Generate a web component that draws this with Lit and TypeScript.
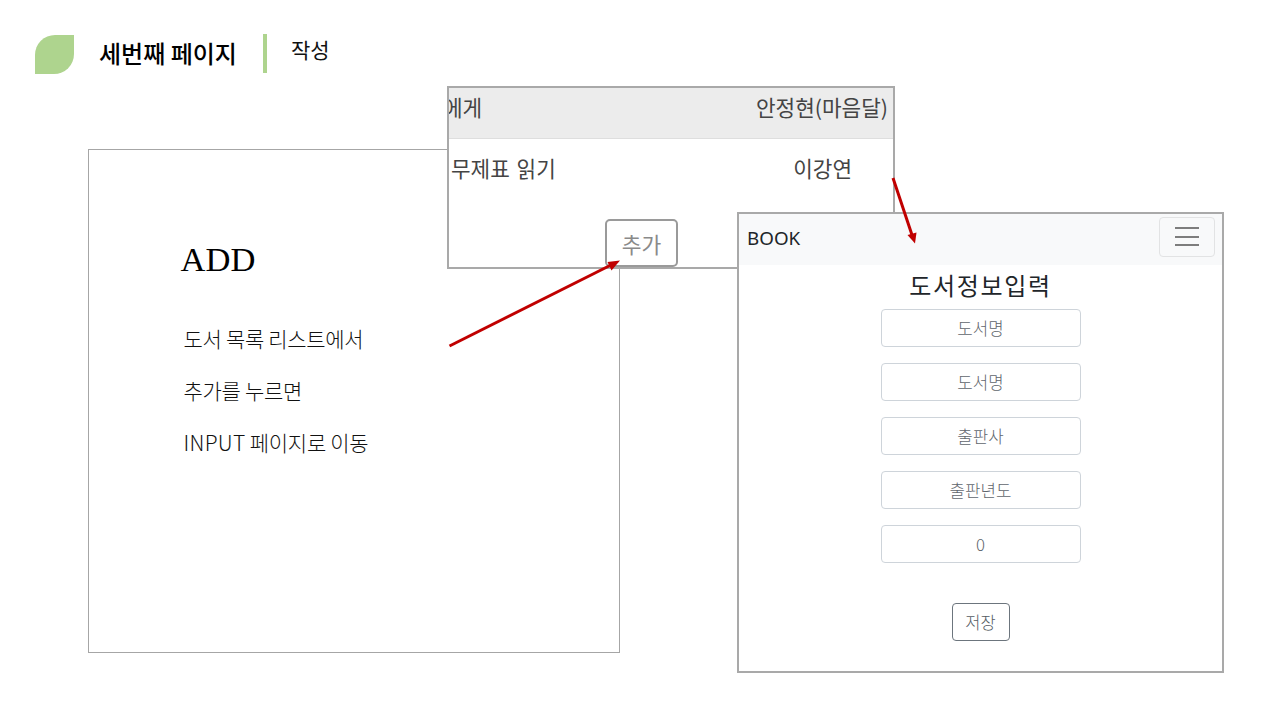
import { LitElement, html, css } from "lit";
import { customElement } from "lit/decorators.js";

@customElement("app-root")
export class AppRoot extends LitElement {
  static styles = css`
    :host { display: block; width: 1280px; height: 720px; background: #fff; font-family: "Noto Sans CJK KR", "Noto Sans", sans-serif; color: #111; overflow: hidden; }
    .slide { position: relative; width: 1280px; height: 720px; background: #fff; overflow: hidden; }
    .head { display: flex; align-items: center; height: 40px; padding: 34px 0 0 35px; }
    .leaf { width: 39px; height: 39px; background: #aed48e; border-radius: 20px 0 20px 0; flex: none; margin-top: 1px; }
    .title { margin-left: 25px; font-size: 24px; font-weight: 500; color: #000; line-height: 40px; margin-top: -2px; }
    .sep { width: 4px; height: 39px; background: #aed48e; margin-left: 26px; flex: none; margin-top: -1px; }
    .sub { margin-left: 24px; font-size: 21px; color: #111; line-height: 30px; align-self: flex-start; }

    .frame { position: absolute; left: 88px; top: 149px; width: 530px; height: 502px; border: 1px solid #a6a6a6; }
    .add { position: absolute; left: 91.5px; top: 85px; font-family: "Liberation Serif", serif; font-size: 34.6px; line-height: 48px; color: #000; }
    .lines { position: absolute; left: 94.5px; top: 170px; display: flex; flex-direction: column; gap: 16px; font-size: 21px; font-weight: 300; line-height: 36px; color: #111; letter-spacing: -0.3px; }
    .latin { letter-spacing: 0.3px; }

    .list { position: absolute; left: 447px; top: 86px; width: 444px; height: 179px; border: 2px solid #a9a9a9; background: #fff; font-size: 21.3px; color: #444; overflow: hidden; }
    .list-head { display: flex; justify-content: space-between; align-items: center; height: 37px; background: #ececec; border-bottom: 1px solid #dedede; padding: 0 5px 13px 0; }
    .list-head .cut { margin-left: -6px; }
    .list-row { display: flex; justify-content: space-between; align-items: center; height: 56px; padding: 0 41px 0 2px; word-spacing: 2px; }
    .add-btn { position: absolute; left: 156px; top: 131px; width: 69px; height: 44px; border: 2px solid #9a9a9a; border-radius: 5px; background: #fff; display: flex; align-items: center; justify-content: center; font-size: 21.5px; color: #8a8a8a; }

    .book { position: absolute; left: 737px; top: 212px; width: 483px; height: 457px; border: 2px solid #a9a9a9; background: #fff; display: flex; flex-direction: column; align-items: center; }
    .nav { align-self: stretch; height: 51px; background: #f8f9fa; display: flex; align-items: center; justify-content: space-between; padding: 0 7px 0 8px; }
    .brand { font-family: "Noto Sans", sans-serif; font-size: 18.8px; color: #212529; margin-top: -4px; }
    .toggler { width: 54px; height: 38px; border: 1px solid #e2e3e4; border-radius: 4px; display: flex; flex-direction: column; align-items: center; justify-content: center; gap: 6.5px; margin-top: -6px; }
    .toggler i { display: block; width: 24px; height: 2px; background: #7d7d7d; }
    h1 { margin: 3px 0 0; font-size: 24px; font-weight: 400; line-height: 34px; color: #212529; letter-spacing: 1.7px; }
    .fields { display: flex; flex-direction: column; gap: 16px; margin-top: 7px; }
    .field { width: 198px; height: 36px; border: 1px solid #ced4da; border-radius: 4px; display: flex; align-items: center; justify-content: center; font-size: 16.8px; font-weight: 300; color: #5f666d; background: #fff; }
    .save { margin-top: 40px; width: 56px; height: 36px; border: 1px solid #6c757d; border-radius: 4px; display: flex; align-items: center; justify-content: center; font-size: 16.5px; font-weight: 300; color: #555c63; }

    .arrows { position: absolute; left: 0; top: 0; pointer-events: none; }
  `;

  render() {
    return html`<div class="slide">
      <div class="head">
        <div class="leaf"></div>
        <div class="title">세번째 페이지</div>
        <div class="sep"></div>
        <div class="sub">작성</div>
      </div>

      <div class="frame">
        <div class="add">ADD</div>
        <div class="lines">
          <div>도서 목록 리스트에서</div>
          <div>추가를 누르면</div>
          <div><span class="latin">INPUT</span> 페이지로 이동</div>
        </div>
      </div>

      <div class="list">
        <div class="list-head"><span class="cut">에게</span><span>안정현(마음달)</span></div>
        <div class="list-row"><span>무제표 읽기</span><span>이강연</span></div>
        <div class="add-btn">추가</div>
      </div>

      <div class="book">
        <div class="nav">
          <span class="brand">BOOK</span>
          <span class="toggler"><i></i><i></i><i></i></span>
        </div>
        <h1>도서정보입력</h1>
        <div class="fields">
          ${["도서명", "도서명", "출판사", "출판년도", "0"].map((t) => html`<div class="field">${t}</div>`)}
        </div>
        <div class="save">저장</div>
      </div>

      <svg class="arrows" width="1280" height="720" viewBox="0 0 1280 720">
        <g stroke="#c00000" stroke-width="3" fill="#c00000">
          <line x1="449.5" y1="346" x2="610" y2="265.5"></line>
          <polygon stroke="none" points="620,260.5 611.5,270.5 607.5,262"></polygon>
          <line x1="893" y1="178" x2="912" y2="235"></line>
          <polygon stroke="none" points="915,243.5 907.5,235 916.5,232.5"></polygon>
        </g>
      </svg>
    </div>`;
  }
}
